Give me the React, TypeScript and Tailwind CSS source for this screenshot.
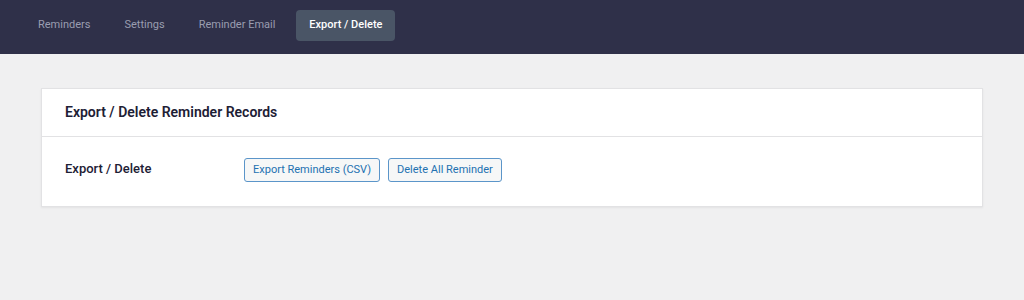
export default function App() {
  const tabs = ["Reminders", "Settings", "Reminder Email", "Export / Delete"];
  const active = "Export / Delete";

  return (
    <div className="min-h-[300px] bg-[#f0f0f1] font-['Roboto',sans-serif]">
      <div className="flex h-[54px] items-start gap-2 bg-[#2f3049] px-[25px] pt-[10px]">
        {tabs.map((t) => (
          <div
            key={t}
            className={
              t === active
                ? "flex h-[31px] items-center rounded-[4px] bg-[#4a5566] px-[13px] text-[11px] font-medium text-white"
                : "flex h-[31px] items-center px-[13px] text-[11px] text-[#9a9db0]"
            }
          >
            {t}
          </div>
        ))}
      </div>

      <div className="px-[41px] pt-[34px]">
        <div className="border border-[#e2e2e4] bg-white shadow-[0_1px_2px_rgba(0,0,0,0.06)]">
          <div className="flex h-[48px] items-center border-b border-[#e2e2e4] px-[23px]">
            <h2 className="text-[14px] font-semibold text-[#1d2035]">Export / Delete Reminder Records</h2>
          </div>
          <div className="flex items-start px-[23px] pt-[21px] pb-[24px]">
            <div className="w-[179px] pt-[1px] text-[13px] font-medium text-[#1d2035]">Export / Delete</div>
            <div className="flex gap-2">
              <button className="h-[24px] rounded-[3px] border border-[#5b95c9] bg-[#f6f7f7] px-[8px] text-[11px] text-[#2271b1]">
                Export Reminders (CSV)
              </button>
              <button className="h-[24px] rounded-[3px] border border-[#5b95c9] bg-[#f6f7f7] px-[8px] text-[11px] text-[#2271b1]">
                Delete All Reminder
              </button>
            </div>
          </div>
        </div>
      </div>
    </div>
  );
}
